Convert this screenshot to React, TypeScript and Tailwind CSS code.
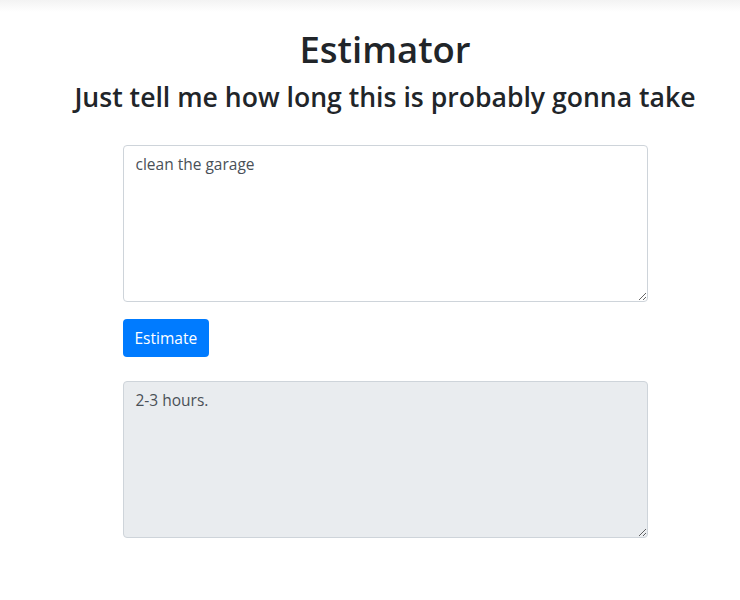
import React from 'react';

const font = { fontFamily: '"Open Sans", "Noto Sans", sans-serif' };

export default function App() {
  return (
    <div className="min-h-[600px] bg-white text-[#212529]" style={font}>
      <div className="h-[12px] bg-gradient-to-b from-[#f3f3f3] to-white" />
      <div className="pl-[30px] flex flex-col items-center">
        <h1 className="mt-[14px] text-[36.5px] leading-[46px] font-semibold text-center">Estimator</h1>
        <h3 className="mt-[8px] text-[26.6px] leading-[34px] font-semibold text-center">
          Just tell me how long this is probably gonna take
        </h3>
        <div className="mt-[31px] w-[525px] flex flex-col items-start">
          <textarea
            className="w-full h-[157px] border border-[#ced4da] rounded-[4px] px-3 py-[6px] text-[15.5px] leading-6 text-[#495057] outline-none"
            defaultValue="clean the garage"
          />
          <button className="mt-[17px] bg-[#007bff] text-white rounded-[4px] px-3 h-[38px] text-[15.5px] leading-6">
            Estimate
          </button>
          <textarea
            readOnly
            className="mt-[24px] w-full h-[157px] border border-[#ced4da] rounded-[4px] px-3 py-[6px] text-[15.5px] leading-6 text-[#495057] bg-[#e9ecef] outline-none"
            defaultValue="2-3 hours."
          />
        </div>
      </div>
    </div>
  );
}
